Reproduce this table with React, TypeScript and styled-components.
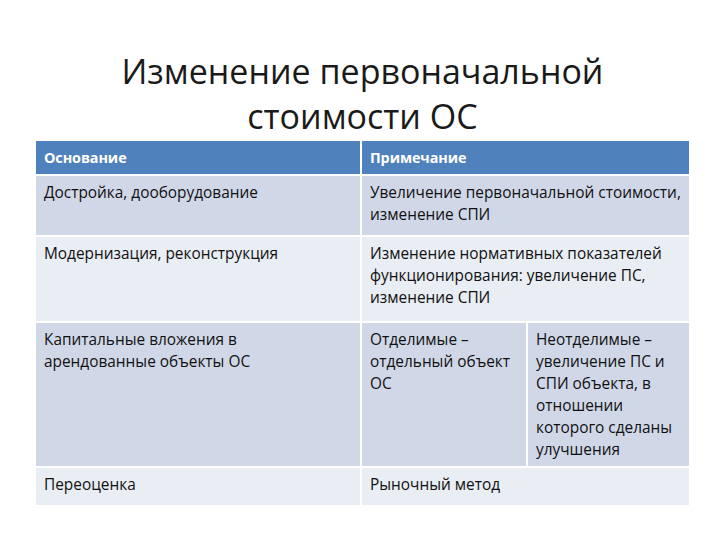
import React from 'react';
import styled, { createGlobalStyle } from 'styled-components';

const GlobalStyle = createGlobalStyle`
  html, body {
    margin: 0;
    padding: 0;
    background: #ffffff;
  }
`;

const Slide = styled.div`
  width: 720px;
  height: 540px;
  box-sizing: border-box;
  padding: 49px 31px 0 36px;
  font-family: 'Open Sans', 'Liberation Sans', sans-serif;
  color: #111;
`;

const Title = styled.h1`
  margin: 0;
  height: 92px;
  font-weight: 400;
  font-size: 34px;
  line-height: 45px;
  text-align: center;
  color: #1a1a1a;
`;

const Table = styled.div`
  display: grid;
  grid-template-columns: 324px 164px 161px;
  grid-template-rows: 33px 59px 84px 143px 37px;
  gap: 2px;
`;

const Cell = styled.div<{ $span?: number; $tone: 'head' | 'dark' | 'light' }>`
  grid-column: span ${(p) => p.$span ?? 1};
  box-sizing: border-box;
  padding: 6px 0 0 8px;
  white-space: pre;
  font-size: ${(p) => (p.$tone === 'head' ? '14.4px' : '15.4px')};
  line-height: 22px;
  letter-spacing: ${(p) => (p.$tone === 'head' ? '-0.1px' : '0')};
  background: ${(p) => (p.$tone === 'head' ? '#4f81bd' : p.$tone === 'dark' ? '#d0d8e8' : '#e9edf4')};
  color: ${(p) => (p.$tone === 'head' ? '#ffffff' : '#111111')};
  font-weight: ${(p) => (p.$tone === 'head' ? 700 : 400)};
`;

const rows: { tone: 'dark' | 'light'; cells: { text: string; span?: number }[] }[] = [
  {
    tone: 'dark',
    cells: [
      { text: 'Достройка, дооборудование' },
      { text: 'Увеличение первоначальной стоимости,\nизменение СПИ', span: 2 },
    ],
  },
  {
    tone: 'light',
    cells: [
      { text: 'Модернизация, реконструкция' },
      { text: 'Изменение нормативных показателей\nфункционирования: увеличение ПС,\nизменение СПИ', span: 2 },
    ],
  },
  {
    tone: 'dark',
    cells: [
      { text: 'Капитальные вложения в\nарендованные объекты ОС' },
      { text: 'Отделимые –\nотдельный объект\nОС' },
      { text: 'Неотделимые –\nувеличение ПС и\nСПИ объекта, в\nотношении\nкоторого сделаны\nулучшения' },
    ],
  },
  {
    tone: 'light',
    cells: [{ text: 'Переоценка' }, { text: 'Рыночный метод', span: 2 }],
  },
];

const App = () => (
  <Slide>
    <GlobalStyle />
    <Title>
      Изменение первоначальной
      <br />
      стоимости ОС
    </Title>
    <Table>
      <Cell $tone="head">Основание</Cell>
      <Cell $tone="head" $span={2}>Примечание</Cell>
      {rows.map((row, i) => row.cells.map((c, j) => (
        <Cell key={`${i}-${j}`} $tone={row.tone} $span={c.span}>{c.text}</Cell>
      )))}
    </Table>
  </Slide>
);

export default App;
